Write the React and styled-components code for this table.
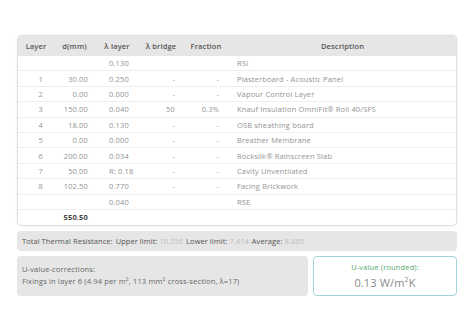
import React from "react";
import styled, { createGlobalStyle } from "styled-components";

const GlobalStyle = createGlobalStyle`
  html, body { margin: 0; padding: 0; background: #ffffff; }
  body { font-family: "Open Sans", "Lato", sans-serif; letter-spacing: 0.15px; }
`;

const Page = styled.div`
  padding: 35px 17px 0 17px;
  display: flex;
  flex-direction: column;
  gap: 5px;
`;

const TableCard = styled.div`
  border: 1px solid #dedede;
  border-radius: 4px;
  overflow: hidden;
  box-shadow: 0 0 3px rgba(0, 0, 0, 0.06);
`;

const Table = styled.table`
  width: 100%;
  border-collapse: collapse;
  table-layout: fixed;
  font-size: 7.5px;
  color: #939393;
`;

const HeadCell = styled.th`
  background: #e6e6e6;
  color: #555;
  font-weight: 600;
  height: 19px;
  padding: 0;
  text-align: center;
  width: ${(p) => p.$w || "auto"};
`;

const Row = styled.tr`
  height: 15.4px;
  border-top: 1px solid ${(p) => (p.$first ? "transparent" : "#efefef")};
`;

const Cell = styled.td`
  padding: 0 ${(p) => p.$pr ?? 8}px 0 ${(p) => p.$pl ?? 0}px;
  text-align: ${(p) => p.$align || "right"};
  white-space: nowrap;
  vertical-align: middle;
`;

const SumCell = styled.td`
  padding: 0 7px 0 0;
  text-align: right;
  font-weight: 700;
  color: #444;
  border-top: 1px dotted #999;
`;

const TotalBar = styled.div`
  background: #e6e6e6;
  border-radius: 4px;
  height: 20px;
  display: flex;
  align-items: center;
  padding: 0 5px;
  font-size: 7.5px;
  letter-spacing: 0.05px;
  color: #555;
  gap: 3px;
  white-space: nowrap;
`;

const Label = styled.span`
  color: #555;
`;

const Faint = styled.span`
  color: #bdbdbd;
  margin-left: 2px;
`;

const BottomRow = styled.div`
  display: grid;
  grid-template-columns: 291px 1fr;
  gap: 5px;
`;

const Corrections = styled.div`
  background: #e6e6e6;
  border-radius: 4px;
  height: 40px;
  box-sizing: border-box;
  padding: 8px 5px 0 5px;
  font-size: 7.5px;
  color: #666;
  display: flex;
  flex-direction: column;
  gap: 2px;
  sup { font-size: 5px; line-height: 0; }
`;

const UValueBox = styled.div`
  border: 1px solid #9fd3d6;
  border-radius: 4px;
  height: 40px;
  box-sizing: border-box;
  display: flex;
  flex-direction: column;
  align-items: center;
  justify-content: center;
  gap: 3px;
`;

const UTitle = styled.div`
  font-size: 7.5px;
  color: #55a872;
`;

const UValue = styled.div`
  font-size: 11px;
  color: #8a8a8a;
  sup { font-size: 7px; line-height: 0; }
`;

const layers = [
  { n: "", d: "", l: "0.130", b: "", f: "", desc: "RSI" },
  { n: "1", d: "30.00", l: "0.250", b: "-", f: "-", desc: "Plasterboard - Acoustic Panel" },
  { n: "2", d: "0.00", l: "0.000", b: "-", f: "-", desc: "Vapour Control Layer" },
  { n: "3", d: "150.00", l: "0.040", b: "50", f: "0.3%", desc: "Knauf Insulation OmniFit® Roll 40/SFS" },
  { n: "4", d: "18.00", l: "0.130", b: "-", f: "-", desc: "OSB sheathing board" },
  { n: "5", d: "0.00", l: "0.000", b: "-", f: "-", desc: "Breather Membrane" },
  { n: "6", d: "200.00", l: "0.034", b: "-", f: "-", desc: "Rocksilk® Rainscreen Slab" },
  { n: "7", d: "50.00", l: "R: 0.18", b: "-", f: "-", desc: "Cavity Unventilated" },
  { n: "8", d: "102.50", l: "0.770", b: "-", f: "-", desc: "Facing Brickwork" },
  { n: "", d: "", l: "0.040", b: "", f: "", desc: "RSE" },
];

export default function App() {
  return (
    <>
      <GlobalStyle />
      <Page>
        <TableCard>
          <Table>
            <thead>
              <tr>
                <HeadCell $w="36px">Layer</HeadCell>
                <HeadCell $w="41px">d(mm)</HeadCell>
                <HeadCell $w="44px">λ layer</HeadCell>
                <HeadCell $w="44px">λ bridge</HeadCell>
                <HeadCell $w="46px">Fraction</HeadCell>
                <HeadCell>Description</HeadCell>
              </tr>
            </thead>
            <tbody>
              {layers.map((r, i) => (
                <Row key={i} $first={i === 0}>
                  <Cell $pr={11}>{r.n}</Cell>
                  <Cell $pr={7}>{r.d}</Cell>
                  <Cell $align="left" $pl={14} $pr={0}>{r.l}</Cell>
                  <Cell $pr={8}>{r.b}</Cell>
                  <Cell $pr={10}>{r.f}</Cell>
                  <Cell $align="left" $pl={8}>{r.desc}</Cell>
                </Row>
              ))}
              <Row>
                <Cell />
                <SumCell>550.50</SumCell>
                <Cell />
                <Cell />
                <Cell />
                <Cell />
              </Row>
            </tbody>
          </Table>
        </TableCard>

        <TotalBar>
          <Label>Total Thermal Resistance:</Label>
          <Label>
            Upper limit:<Faint>10.356</Faint>
          </Label>
          <Label>
            Lower limit:<Faint>7.414</Faint>
          </Label>
          <Label>
            Average:<Faint>8.885</Faint>
          </Label>
        </TotalBar>

        <BottomRow>
          <Corrections>
            <div>U-value-corrections:</div>
            <div>
              Fixings in layer 6 (4.94 per m<sup>2</sup>, 113 mm<sup>2</sup> cross-section, λ=17)
            </div>
          </Corrections>
          <UValueBox>
            <UTitle>U-value (rounded):</UTitle>
            <UValue>
              0.13 W/m<sup>2</sup>K
            </UValue>
          </UValueBox>
        </BottomRow>
      </Page>
    </>
  );
}
